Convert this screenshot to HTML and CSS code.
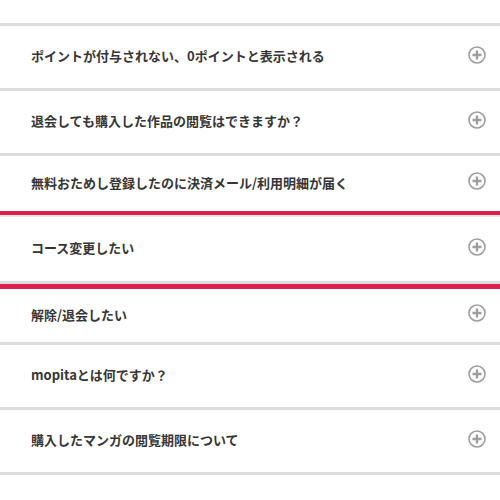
FILE: index.html
```html
<!DOCTYPE html>
<html lang="ja">
<head>
<meta charset="utf-8">
<link rel="stylesheet" href="styles.css">
</head>
<body>
<ul class="faq-list">
  <li class="faq-item">
    <span class="faq-q">ポイントが付与されない、0ポイントと表示される</span>
    <svg class="faq-icon" viewBox="0 0 18 18"><circle cx="9" cy="9" r="8" /><path d="M9 4.5v9M4.5 9h9" /></svg>
  </li>
  <li class="faq-item">
    <span class="faq-q">退会しても購入した作品の閲覧はできますか？</span>
    <svg class="faq-icon" viewBox="0 0 18 18"><circle cx="9" cy="9" r="8" /><path d="M9 4.5v9M4.5 9h9" /></svg>
  </li>
  <li class="faq-item faq-item--before">
    <span class="faq-q">無料おためし登録したのに決済メール/利用明細が届く</span>
    <svg class="faq-icon" viewBox="0 0 18 18"><circle cx="9" cy="9" r="8" /><path d="M9 4.5v9M4.5 9h9" /></svg>
  </li>
  <li class="highlight">
    <div class="faq-item faq-item--active">
      <span class="faq-q">コース変更したい</span>
      <svg class="faq-icon" viewBox="0 0 18 18"><circle cx="9" cy="9" r="8" /><path d="M9 4.5v9M4.5 9h9" /></svg>
    </div>
  </li>
  <li class="faq-item faq-item--after">
    <span class="faq-q">解除/退会したい</span>
    <svg class="faq-icon" viewBox="0 0 18 18"><circle cx="9" cy="9" r="8" /><path d="M9 4.5v9M4.5 9h9" /></svg>
  </li>
  <li class="faq-item">
    <span class="faq-q">mopitaとは何ですか？</span>
    <svg class="faq-icon" viewBox="0 0 18 18"><circle cx="9" cy="9" r="8" /><path d="M9 4.5v9M4.5 9h9" /></svg>
  </li>
  <li class="faq-item">
    <span class="faq-q">購入したマンガの閲覧期限について</span>
    <svg class="faq-icon" viewBox="0 0 18 18"><circle cx="9" cy="9" r="8" /><path d="M9 4.5v9M4.5 9h9" /></svg>
  </li>
</ul>
</body>
</html>
```

FILE: styles.css
```css
html, body {
  margin: 0;
  padding: 0;
  background: #ffffff;
}

body {
  font-family: "Noto Sans CJK JP", "Noto Sans", sans-serif;
  color: #363636;
}

.faq-list {
  list-style: none;
  margin: 23px 0 0;
  padding: 0;
  border-top: 3px solid #dddddd;
}

.faq-item {
  display: flex;
  align-items: center;
  justify-content: space-between;
  height: 62px;
  padding: 0 14px 0 31px;
  border-bottom: 3px solid #dddddd;
}

.faq-item--before {
  height: 55px;
  border-bottom: 0;
}

.highlight {
  border-top: 4px solid #dc1f4d;
  border-bottom: 5px solid #dc1f4d;
}

.faq-item--active {
  height: 64px;
  border-top: 2px solid #e6e6e6;
}

.faq-item--after {
  height: 53px;
}

.faq-q {
  font-size: 13px;
  font-weight: 700;
  line-height: 1;
  margin-bottom: 3px;
}

.faq-icon {
  width: 18px;
  height: 18px;
  flex: none;
  margin-bottom: 5px;
  fill: none;
  stroke: #9d9d9d;
  stroke-width: 1.6;
}

.faq-icon path {
  stroke-width: 2.3;
}
```
